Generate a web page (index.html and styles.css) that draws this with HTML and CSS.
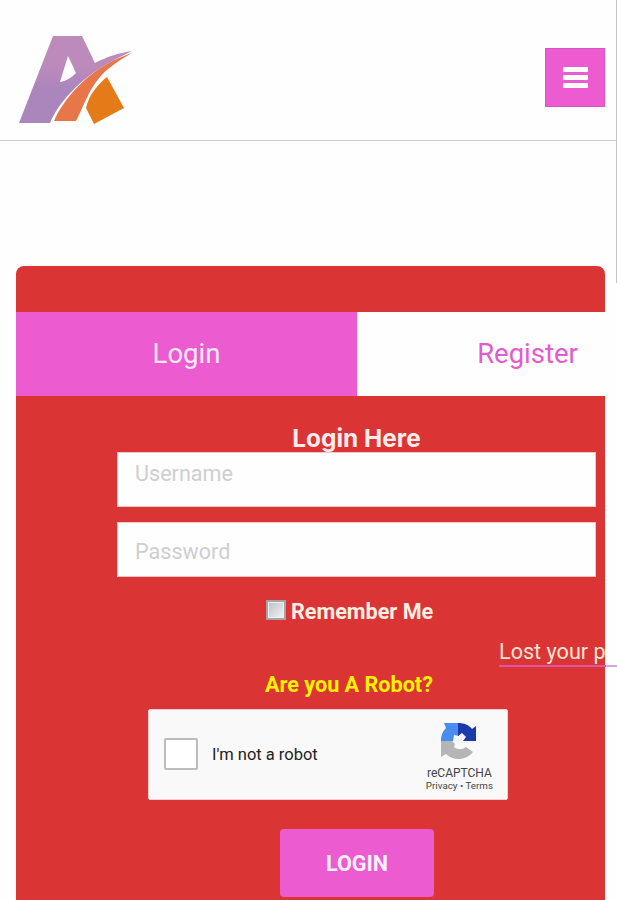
FILE: index.html
```html
<!DOCTYPE html>
<html lang="en">
<head>
    <meta charset="UTF-8">
    <meta name="viewport" content="width=device-width, initial-scale=1.0">
    <title>Login</title>
    <link rel="stylesheet" href="styles.css">
</head>
<body>
    <header class="site-header">
        <a class="logo" href="#" aria-label="Home">
            <svg width="116" height="92" viewBox="0 0 116 92">
                <defs>
                    <linearGradient id="purple" x1="0" y1="0" x2="0" y2="1">
                        <stop offset="0.35" stop-color="#bd8abc"/>
                        <stop offset="0.6" stop-color="#aa86bd"/>
                    </linearGradient>
                </defs>
                <path fill="url(#purple)" d="M35 1H64L77 28C88 22 101 18 114 16C91 27 72 38 57 53C45 65 37 76 32 88H1ZM50 21L42 47C48 46 53 43 58 38Z"/>
                <path fill="#e77748" d="M36 86C44 67 63 45 84 32C95 25 105 21 114 18C98 27 85 36 76 50C67 64 64 75 58 86Z"/>
                <path fill="#e57b18" d="M89 42L106 73L76 89L68 73C71 60 79 50 89 42Z"/>
            </svg>
        </a>
        <button class="menu-btn" aria-label="Menu">
            <span></span><span></span><span></span>
        </button>
    </header>
    <div class="scroll-line"></div>

    <main class="login-card">
        <div class="tabs">
            <a class="tab active" href="#">Login</a>
            <a class="tab" href="#">Register</a>
        </div>

        <form class="login-form">
            <h3>Login Here</h3>
            <input class="field username" type="text" placeholder="Username">
            <input class="field" type="password" placeholder="Password">
            <label class="remember"><input type="checkbox"><span>Remember Me</span></label>
            <a class="lost" href="#">Lost your p</a>
            <p class="robot">Are you A Robot?</p>
            <div class="captcha">
                <span class="captcha-box"></span>
                <span class="captcha-label">I'm not a robot</span>
                <div class="captcha-brand">
                    <svg width="38" height="38" viewBox="0 0 38 38">
                        <path fill="#4a8df0" d="M1 19C1 13 3 9 6 6L4 1H19V14L14 13L13 19Z"/>
                        <path fill="#1c3aa9" d="M18 1C24 1 29 3 32 7L36 4V19H23L26 15L22 11L18 14Z"/>
                        <path fill="#b5b5b5" d="M1 19H12L15 22L14 25C18 28 22 28 26 25L33 30C26 39 13 39 6 32L1 35Z"/>
                    </svg>
                    <span class="brand-name">reCAPTCHA</span>
                    <span class="brand-links">Privacy • Terms</span>
                </div>
            </div>
            <button class="submit" type="button">LOGIN</button>
        </form>
    </main>
</body>
</html>
```
FILE: styles.css
```css
* { box-sizing: border-box; }
body {
    margin: 0;
    height: 900px;
    overflow: hidden;
    font-family: Roboto, sans-serif;
    background: #fefefe;
}
a { text-decoration: none; }

.site-header {
    height: 141px;
    display: flex;
    justify-content: space-between;
    align-items: flex-start;
    padding: 35px 12px 0 18px;
    border-bottom: 1px solid #cbcbcb;
}
.logo svg { display: block; }
.menu-btn {
    width: 60px;
    height: 59px;
    margin-top: 13px;
    padding: 0;
    display: flex;
    flex-direction: column;
    justify-content: center;
    align-items: center;
    gap: 3px;
    border: 1px solid #d655c2;
    background: #ec5bd0;
}
.menu-btn span {
    width: 25px;
    height: 5px;
    border-radius: 1px;
    background: #fff;
}
/* edge line over the page, beside the scroll area */
.scroll-line {
    position: absolute;
    top: 0;
    right: 0;
    width: 1px;
    height: 283px;
    background: #c4c4c4;
}

.login-card {
    height: 634px;
    margin: 125px 12px 0 16px;
    padding-top: 46px;
    border-radius: 8px 8px 0 0;
    background: #da3534;
}
.tabs {
    display: flex;
    overflow: hidden;
}
.tab {
    flex: 0 0 341px;
    height: 84px;
    line-height: 83px;
    text-align: center;
    font-size: 27.5px;
    color: #e35cce;
    background: #fefefe;
}
.tab.active {
    color: #fde9fa;
    background: #ec5bd0;
}

.login-form {
    width: 479px;
    margin-left: 101px;
    display: flex;
    flex-direction: column;
}
.login-form h3 {
    position: relative;
    height: 56px;
    margin: 0;
    padding-top: 27px;
    line-height: 30px;
    text-align: center;
    font-family: Inter, Roboto, sans-serif;
    font-size: 24.4px;
    font-weight: 700;
    color: #fdeaea;
}
.field {
    width: 100%;
    height: 55px;
    margin-bottom: 15px;
    padding: 4px 17px 0;
    border: 1px solid #f3c4c4;
    font-family: inherit;
    font-size: 21.6px;
    background: #fefefe;
}
.field.username { padding: 0 17px 13px; }
.field::placeholder { color: #cfcfcf; }

.remember {
    display: flex;
    align-items: center;
    gap: 5px;
    height: 30px;
    margin: 4px 0 0 149px;
    font-size: 21.6px;
    font-weight: 700;
    color: #fdf0e2;
}
.remember input {
    appearance: none;
    width: 20px;
    height: 20px;
    margin: 0 0 3px;
    border: 2px solid #a4a4a4;
    outline: 1px solid #eee;
    outline-offset: -3px;
    background: linear-gradient(135deg, #b9c0c6, #f4f4f4);
}
.lost {
    width: 118px;
    height: 30px;
    margin: 11px 0 0 382px;
    line-height: 29px;
    white-space: nowrap;
    font-size: 21.6px;
    color: #fde3d3;
    border-bottom: 2px solid;
    border-image: linear-gradient(90deg, #e255a5 106px, #d9a3dc 106px) 1;
}
.robot {
    margin: 4px 0 0 148px;
    line-height: 27px;
    font-size: 21.6px;
    font-weight: 700;
    color: #fff200;
}

.captcha {
    width: 360px;
    height: 91px;
    margin: 11px 0 0 31px;
    padding: 0 14px 0 15px;
    display: flex;
    align-items: center;
    border: 1px solid #eed0d0;
    border-radius: 2px;
    background: #f9f9f9;
}
.captcha-box {
    width: 34px;
    height: 32px;
    margin-top: -2px;
    border: 2px solid #bcbcbc;
    border-radius: 2px;
    background: #fff;
}
.captcha-label {
    margin-left: 14px;
    font-size: 16.5px;
    color: #222;
}
.captcha-brand {
    margin: 5px 0 0 auto;
    display: flex;
    flex-direction: column;
    align-items: center;
    color: #444;
}
.brand-name {
    margin-top: 6px;
    line-height: 14px;
    font-size: 12px;
}
.brand-links {
    line-height: 12px;
    font-size: 9.8px;
}

.submit {
    width: 154px;
    height: 68px;
    margin: 29px 0 0 163px;
    border: 0;
    border-radius: 4px;
    font-family: inherit;
    font-size: 21.6px;
    font-weight: 700;
    color: #fdeffb;
    background: #ec5bd0;
}
```
